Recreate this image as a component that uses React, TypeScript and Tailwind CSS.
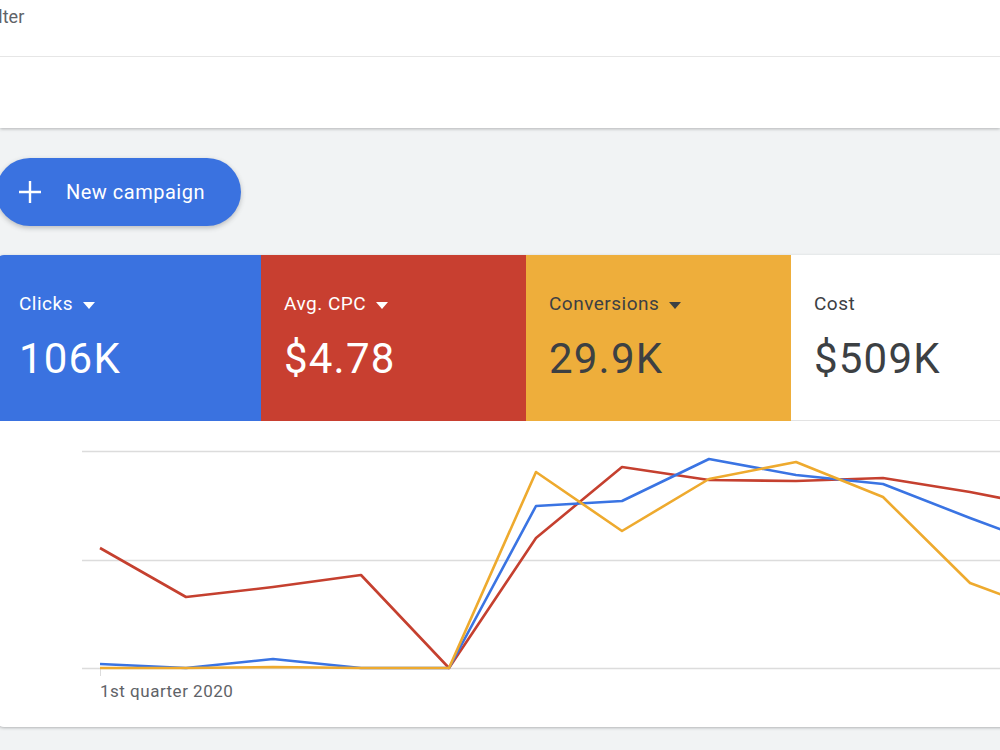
const X = [100, 186, 273, 361, 449, 536, 622, 709, 796, 883, 970, 1057];

const series = [
  { color: "#c5402f", y: [548, 597, 587, 575, 668, 538, 467, 480, 481, 478, 492, 509] },
  { color: "#3a74e3", y: [664, 668, 659, 668, 668, 506, 501, 459, 475, 484, 518, 550] },
  { color: "#eeaa2e", y: [668, 668, 667, 668, 668, 472, 531, 479, 462, 497, 583, 615] },
];

const tiles = [
  { label: "Clicks", value: "106K", bg: "bg-[#3a72e0]", text: "text-white", caret: true },
  { label: "Avg. CPC", value: "$4.78", bg: "bg-[#c83f30]", text: "text-white", caret: true },
  { label: "Conversions", value: "29.9K", bg: "bg-[#eeae3b]", text: "text-[#3c4043]", caret: true },
  { label: "Cost", value: "$509K", bg: "bg-white border-b border-[#e3e3e3]", text: "text-[#3c4043]", caret: false },
];

function Caret() {
  return (
    <svg width="12" height="7" viewBox="0 0 12 7" className="ml-[10px] mt-[2px]">
      <path d="M0 0h12L6 7z" fill="currentColor" />
    </svg>
  );
}

export default function App() {
  return (
    <div className="w-[1000px] h-[750px] overflow-hidden bg-[#f1f3f4] font-['Roboto',sans-serif]">
      {/* filter panel */}
      <div className="h-[128px] bg-white shadow-[0_1px_3px_rgba(60,64,67,0.35)]">
        <div className="h-[57px] overflow-hidden border-b border-[#e6e6e6] pt-[3px]">
          <span className="ml-[-16px] text-[18px] text-[#5f6368]">Filter</span>
        </div>
      </div>

      <div className="pt-[30px]">
        <button className="ml-[-4px] flex h-[68px] w-[245px] items-center rounded-full bg-[#3a72e0] text-white shadow-[0_2px_5px_rgba(60,64,67,0.3)]">
          <svg width="24" height="24" viewBox="0 0 24 24" className="ml-[22px]">
            <path d="M12 1v22M1 12h22" stroke="white" strokeWidth="2.4" />
          </svg>
          <span className="ml-[24px] text-[20px] font-normal tracking-[0.5px]">New campaign</span>
        </button>
      </div>

      <div className="ml-[-4px] mt-[29px] w-[1110px] overflow-hidden rounded-lg bg-white shadow-[0_1px_3px_rgba(60,64,67,0.35)]">
        <div className="flex h-[166px]">
          {tiles.map((t) => (
            <div key={t.label} className={`w-[265px] shrink-0 pl-[23px] pt-[36px] ${t.bg} ${t.text}`}>
              <div className="flex items-center text-[19px] leading-[26px] tracking-[0.5px]">
                {t.label}
                {t.caret && <Caret />}
              </div>
              <div className="mt-[17px] text-[42px] leading-[50px] tracking-[1.2px]">{t.value}</div>
            </div>
          ))}
        </div>
        <svg width="1110" height="306" className="block">
          <g transform="translate(4,-421)">
            {[451, 560, 668].map((y) => (
              <line key={y} x1="82" x2="1110" y1={y + 0.5} y2={y + 0.5} stroke="#dcdcdc" strokeWidth="1.5" />
            ))}
            <line x1="100.5" x2="100.5" y1="668" y2="676" stroke="#dcdcdc" />
            {series.map((s) => (
              <polyline
                key={s.color}
                points={X.map((x, i) => `${x},${s.y[i]}`).join(" ")}
                fill="none"
                stroke={s.color}
                strokeWidth="2.6"
                strokeLinejoin="round"
              />
            ))}
            <text x="100" y="697" fontSize="17" letterSpacing="0.5" fill="#5f6368" fontFamily="Roboto, sans-serif">
              1st quarter 2020
            </text>
          </g>
        </svg>
      </div>
    </div>
  );
}
